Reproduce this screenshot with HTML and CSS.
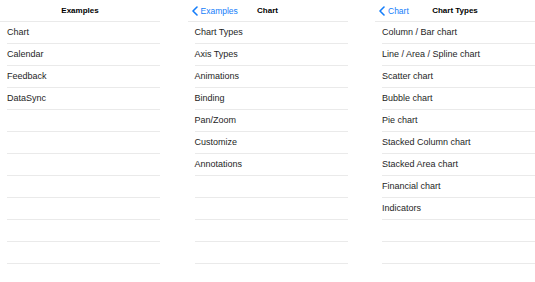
FILE: index.html
```html
<!DOCTYPE html>
<html>
  <head>
    <meta http-equiv="content-type" content="text/html; charset=UTF-8">
    <title>Examples</title>
    <meta name="viewport" content="width=device-width">
    <link rel="stylesheet" href="styles.css">
  </head>
  <body>
    <div class="screens">
      <!-- Screen 1: root list -->
      <section class="screen">
        <header class="navBar">
          <span></span>
          <h1 class="navTitle">Examples</h1>
          <span></span>
        </header>
        <ul class="list">
          <li>Chart</li>
          <li>Calendar</li>
          <li>Feedback</li>
          <li>DataSync</li>
          <li></li><li></li><li></li><li></li><li></li><li></li><li></li>
        </ul>
      </section>

      <!-- Screen 2: chart samples -->
      <section class="screen">
        <header class="navBar">
          <a class="backLink" href="#">
            <svg class="chevron" width="6" height="10" viewBox="0 0 6 10"><path d="M5 1 L1 5 L5 9" fill="none" stroke="currentColor" stroke-width="1.6" stroke-linecap="round" stroke-linejoin="round"/></svg>
            Examples
          </a>
          <h1 class="navTitle">Chart</h1>
          <span></span>
        </header>
        <ul class="list">
          <li>Chart Types</li>
          <li>Axis Types</li>
          <li>Animations</li>
          <li>Binding</li>
          <li>Pan/Zoom</li>
          <li>Customize</li>
          <li>Annotations</li>
          <li></li><li></li><li></li><li></li>
        </ul>
      </section>

      <!-- Screen 3: chart types -->
      <section class="screen">
        <header class="navBar">
          <a class="backLink" href="#">
            <svg class="chevron" width="6" height="10" viewBox="0 0 6 10"><path d="M5 1 L1 5 L5 9" fill="none" stroke="currentColor" stroke-width="1.6" stroke-linecap="round" stroke-linejoin="round"/></svg>
            Chart
          </a>
          <h1 class="navTitle">Chart Types</h1>
          <span></span>
        </header>
        <ul class="list">
          <li>Column / Bar chart</li>
          <li>Line / Area / Spline chart</li>
          <li>Scatter chart</li>
          <li>Bubble chart</li>
          <li>Pie chart</li>
          <li>Stacked Column chart</li>
          <li>Stacked Area chart</li>
          <li>Financial chart</li>
          <li>Indicators</li>
          <li></li><li></li>
        </ul>
      </section>
    </div>
  </body>
</html>
```
FILE: styles.css
```css
:root {
  --background: rgb(255, 255, 255);
  --text: rgb(30, 30, 30);
  --title: rgb(0, 0, 0);
  --accent: rgb(20, 125, 250);
  --separator: rgb(234, 234, 234);
}
body {
  margin: 0;
  background-color: var(--background);
  color: var(--text);
  font-family: "Liberation Sans", Arial, Helvetica, sans-serif;
}
.screens {
  display: flex;
  justify-content: space-between;
}
.screen {
  width: 160px;
}
.navBar {
  display: grid;
  grid-template-columns: 1fr auto 1fr;
  align-items: center;
  height: 21px;
  border-bottom: 1px solid var(--separator);
  padding: 0 4px;
}
.navTitle {
  margin: 0;
  font-size: 8px;
  font-weight: bold;
  color: var(--title);
}
.backLink {
  display: flex;
  align-items: center;
  gap: 3px;
  font-size: 8.5px;
  color: var(--accent);
  text-decoration: none;
  white-space: nowrap;
}
.chevron { display: block; }
.list {
  list-style: none;
  margin: 0;
  padding: 0 0 0 7px;
}
.list li {
  height: 21px;
  line-height: 21px;
  font-size: 9px;
  border-bottom: 1px solid var(--separator);
  white-space: nowrap;
}
```
